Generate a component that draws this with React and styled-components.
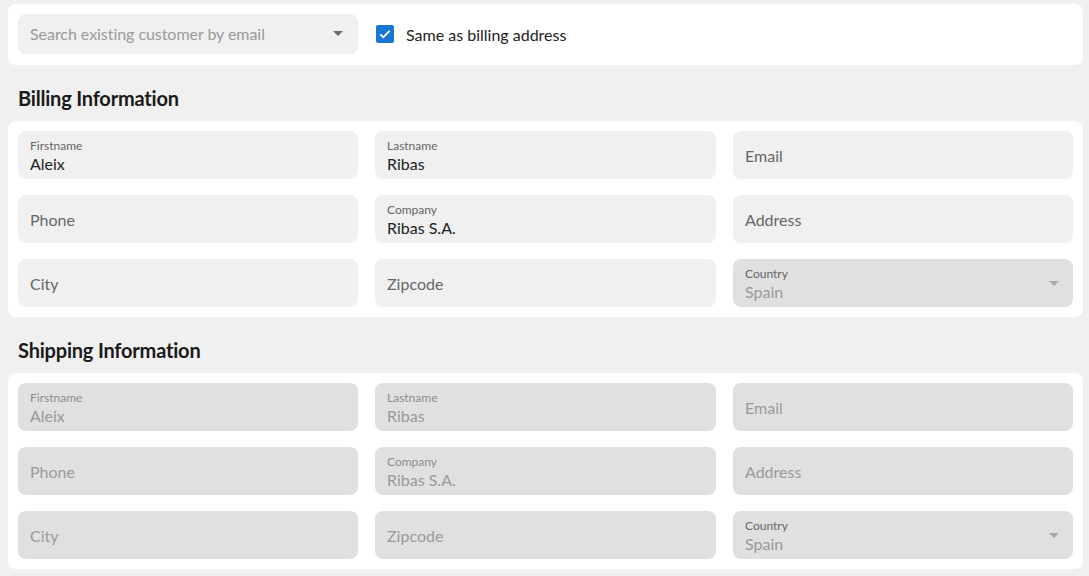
import React from 'react';
import styled, { createGlobalStyle } from 'styled-components';

const GlobalStyle = createGlobalStyle`
	body {
		margin: 0;
		background: #f0f0f0;
		font-family: Lato, "Open Sans", sans-serif;
	}
`;

const Page = styled.div`
	padding: 4px 6px 8px 8px;
`;

const Card = styled.div`
	background: #fff;
	border-radius: 8px;
	padding: ${p => (p.$top ? '10px 10px 11px' : '10px')};
`;

const Grid = styled.div`
	display: grid;
	grid-template-columns: 340px 341px 340px;
	column-gap: 17px;
	row-gap: 16px;
`;

const Heading = styled.h2`
	margin: 0;
	padding: 21px 10px 11px;
	font-size: 20px;
	line-height: 24px;
	font-weight: 700;
	color: #1a1a1a;
	letter-spacing: -0.2px;
`;

const SearchBox = styled.div`
	height: 40px;
	border-radius: 8px;
	background: #f0f0f0;
	display: flex;
	align-items: center;
	justify-content: space-between;
	padding: 0 15px 1px 12px;
	box-sizing: border-box;
	font-size: 16px;
	letter-spacing: -0.05px;
	color: #9a9a9a;
`;

const Arrow = styled.span`
	width: 0;
	height: 0;
	border-left: 5px solid transparent;
	border-right: 5px solid transparent;
	border-top: 5px solid ${p => (p.$muted ? '#a8a8a8' : '#6b6b6b')};
`;

const CheckRow = styled.label`
	display: flex;
	align-items: center;
	gap: 12px;
	padding-left: 1px;
	font-size: 16px;
	color: #222;
`;

const CheckBox = styled.span`
	width: 18px;
	height: 18px;
	border-radius: 2px;
	background: #1976d2;
	display: flex;
	align-items: center;
	justify-content: center;
`;

const Field = styled.div`
	position: relative;
	height: 48px;
	border-radius: 8px;
	background: ${p => (p.$disabled ? '#e0e0e0' : '#f0f0f0')};
	padding: 0 12px;
	display: flex;
	flex-direction: column;
	justify-content: ${p => (p.$filled ? 'flex-start' : 'center')};
	box-sizing: border-box;
`;

const Label = styled.span`
	font-size: 12px;
	line-height: 14px;
	margin-top: 8px;
	color: ${p => (p.$disabled ? '#8c8c8c' : '#666')};
`;

const Value = styled.span`
	font-size: 16px;
	line-height: 22px;
	color: ${p => (p.$disabled ? '#999' : '#222')};
`;

const Placeholder = styled.span`
	font-size: 16px;
	line-height: 23px;
	padding-top: 1px;
	color: ${p => (p.$disabled ? '#9a9a9a' : '#666')};
`;

const SelectArrow = styled.div`
	position: absolute;
	right: 14px;
	top: 22px;
	display: flex;
`;

const TextField = ({ label, value, disabled, labelDark, select }) => (
	<Field $disabled={disabled} $filled={!!value}>
		{value ? (
			<>
				<Label $disabled={disabled && !labelDark}>{label}</Label>
				<Value $disabled={disabled}>{value}</Value>
			</>
		) : (
			<Placeholder $disabled={disabled}>{label}</Placeholder>
		)}
		{select && (
			<SelectArrow>
				<Arrow $muted />
			</SelectArrow>
		)}
	</Field>
);

const AddressForm = ({ disabled }) => (
	<Card>
		<Grid>
			<TextField label="Firstname" value="Aleix" disabled={disabled} />
			<TextField label="Lastname" value="Ribas" disabled={disabled} />
			<TextField label="Email" disabled={disabled} />
			<TextField label="Phone" disabled={disabled} />
			<TextField label="Company" value="Ribas S.A." disabled={disabled} />
			<TextField label="Address" disabled={disabled} />
			<TextField label="City" disabled={disabled} />
			<TextField label="Zipcode" disabled={disabled} />
			<TextField label="Country" value="Spain" disabled labelDark select />
		</Grid>
	</Card>
);

export default function App() {
	return (
		<Page>
			<GlobalStyle />
			<Card $top>
				<Grid>
					<SearchBox>
						Search existing customer by email
						<Arrow />
					</SearchBox>
					<CheckRow>
						<CheckBox>
							<svg width="14" height="14" viewBox="0 0 24 24">
								<path d="M4 12.5l5 5L20 6.5" fill="none" stroke="#fff" strokeWidth="3" />
							</svg>
						</CheckBox>
						Same as billing address
					</CheckRow>
				</Grid>
			</Card>
			<Heading>Billing Information</Heading>
			<AddressForm />
			<Heading>Shipping Information</Heading>
			<AddressForm disabled />
		</Page>
	);
}
